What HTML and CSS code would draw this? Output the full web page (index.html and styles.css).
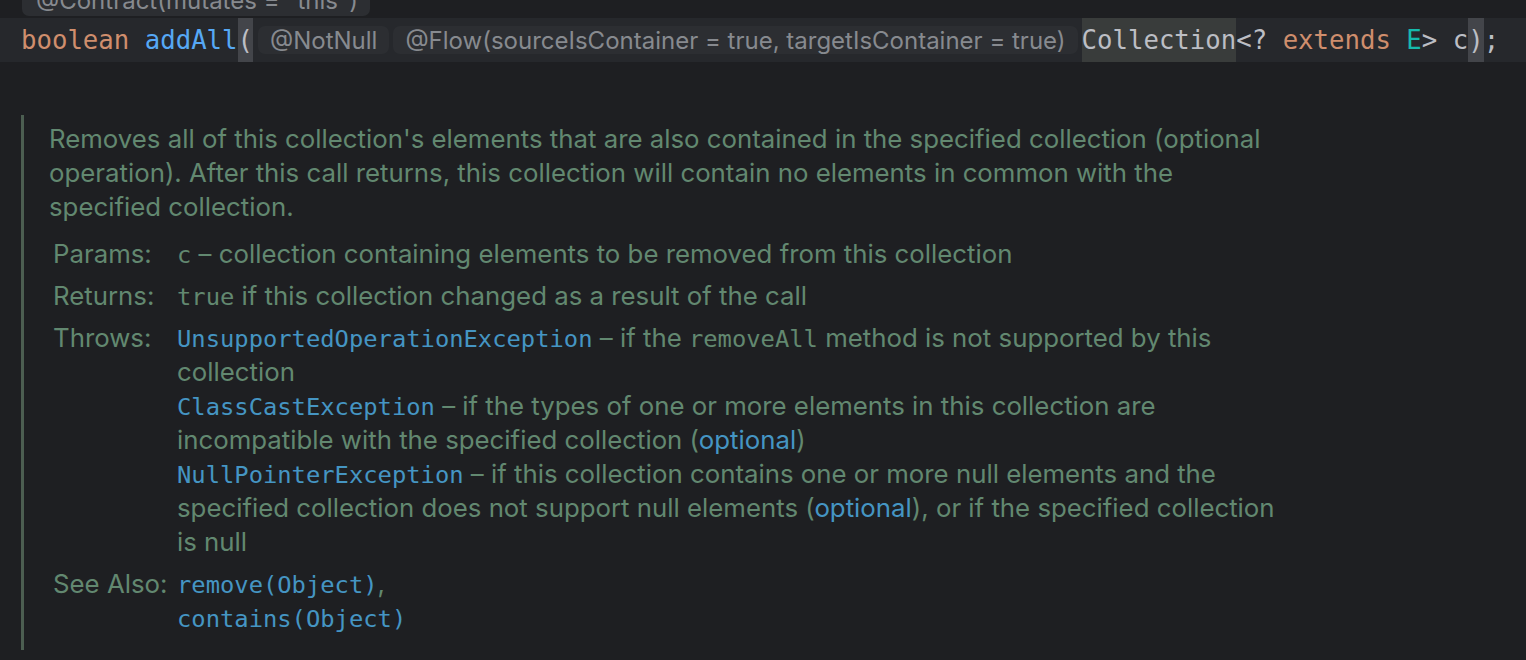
FILE: index.html
```html
<!DOCTYPE html>
<html>
<head>
<meta charset="utf-8">
<link rel="stylesheet" href="styles.css">
</head>
<body>
<div class="editor">
  <div class="top-row">
    <span class="inlay contract">@Contract(mutates = "this")</span>
  </div>
  <div class="code-line">
    <span class="kw">boolean</span>&nbsp;<span class="fn">addAll</span><span class="brace">(</span><span class="inlay first">@NotNull</span><span class="inlay">@Flow(sourceIsContainer = true, targetIsContainer = true)</span><span class="ident-hl">Collection</span>&lt;?&nbsp;<span class="kw">extends</span>&nbsp;<span class="tp">E</span>&gt;&nbsp;c<span class="brace">)</span>;
  </div>
  <div class="doc">
    <p class="desc">Removes all of this collection's elements that are also contained in the specified collection (optional operation). After this call returns, this collection will contain no elements in common with the specified collection.</p>
    <div class="tags">
      <div class="label">Params:</div>
      <div class="value"><code>c</code> – collection containing elements to be removed from this collection</div>
      <div class="label">Returns:</div>
      <div class="value"><code>true</code> if this collection changed as a result of the call</div>
      <div class="label">Throws:</div>
      <div class="value">
        <div><a class="link mono">UnsupportedOperationException</a> – if the <code>removeAll</code> method is not supported by this collection</div>
        <div><a class="link mono">ClassCastException</a> – if the types of one or more elements in this collection are incompatible with the specified collection (<a class="link">optional</a>)</div>
        <div><a class="link mono">NullPointerException</a> – if this collection contains one or more null elements and the specified collection does not support null elements (<a class="link">optional</a>), or if the specified collection is null</div>
      </div>
      <div class="label">See Also:</div>
      <div class="value"><a class="link mono">remove(Object)</a>,<br><a class="link mono">contains(Object)</a></div>
    </div>
  </div>
</div>
</body>
</html>
```
FILE: styles.css
```css
html, body {
  margin: 0;
  padding: 0;
  background: #1e1f22;
}
.editor {
  width: 1526px;
  height: 660px;
  overflow: hidden;
  background: #1e1f22;
}
.top-row {
  height: 18px;
  overflow: hidden;
  display: flex;
  align-items: flex-end;
  padding-left: 22px;
}
.inlay {
  display: inline-flex;
  align-items: center;
  background: #2c2e32;
  color: #878a8f;
  font-family: Inter, "Noto Sans", sans-serif;
  font-size: 24px;
  border-radius: 7px;
  white-space: nowrap;
}
.inlay.contract {
  height: 44px;
  padding: 0 14px;
  margin-bottom: 2px;
  align-items: flex-end;
  line-height: 20px;
  padding-bottom: 5px;
  box-sizing: border-box;
  width: 348px;
}
.code-line {
  height: 44px;
  background: #26282c;
  display: flex;
  align-items: center;
  padding-left: 21px;
  font-family: "DejaVu Sans Mono", "Liberation Mono", monospace;
  font-size: 25.7px;
  color: #bcbec4;
  white-space: nowrap;
}
.code-line .inlay {
  height: 28px;
  padding: 0 12px;
  margin-left: 4px;
}
.code-line .inlay.first {
  margin-left: 5px;
}
.code-line .inlay + .ident-hl {
  margin-left: 4px;
}
.kw { color: #cf8e6d; }
.fn { color: #56a8f5; }
.tp { color: #16baac; }
.brace {
  background: #43454a;
  align-self: stretch;
  display: inline-flex;
  align-items: center;
}
.ident-hl {
  background: #393c3b;
  align-self: stretch;
  display: inline-flex;
  align-items: center;
}
.doc {
  margin: 53px 0 0 21px;
  border-left: 3px solid #4c5e51;
  padding: 7px 0 15px 25px;
  width: 1236px;
  font-family: Inter, "Noto Sans", sans-serif;
  font-size: 25.8px;
  line-height: 34px;
  color: #628870;
}
.desc {
  margin: 0;
}
.tags {
  margin: 13px 0 0 4px;
  display: grid;
  grid-template-columns: 124px 1fr;
  row-gap: 8px;
}
.label {
  white-space: nowrap;
}
code, .mono {
  font-family: "DejaVu Sans Mono", "Liberation Mono", monospace;
  font-size: 23.8px;
  line-height: 1;
}
.link {
  color: #4595c3;
}
```
